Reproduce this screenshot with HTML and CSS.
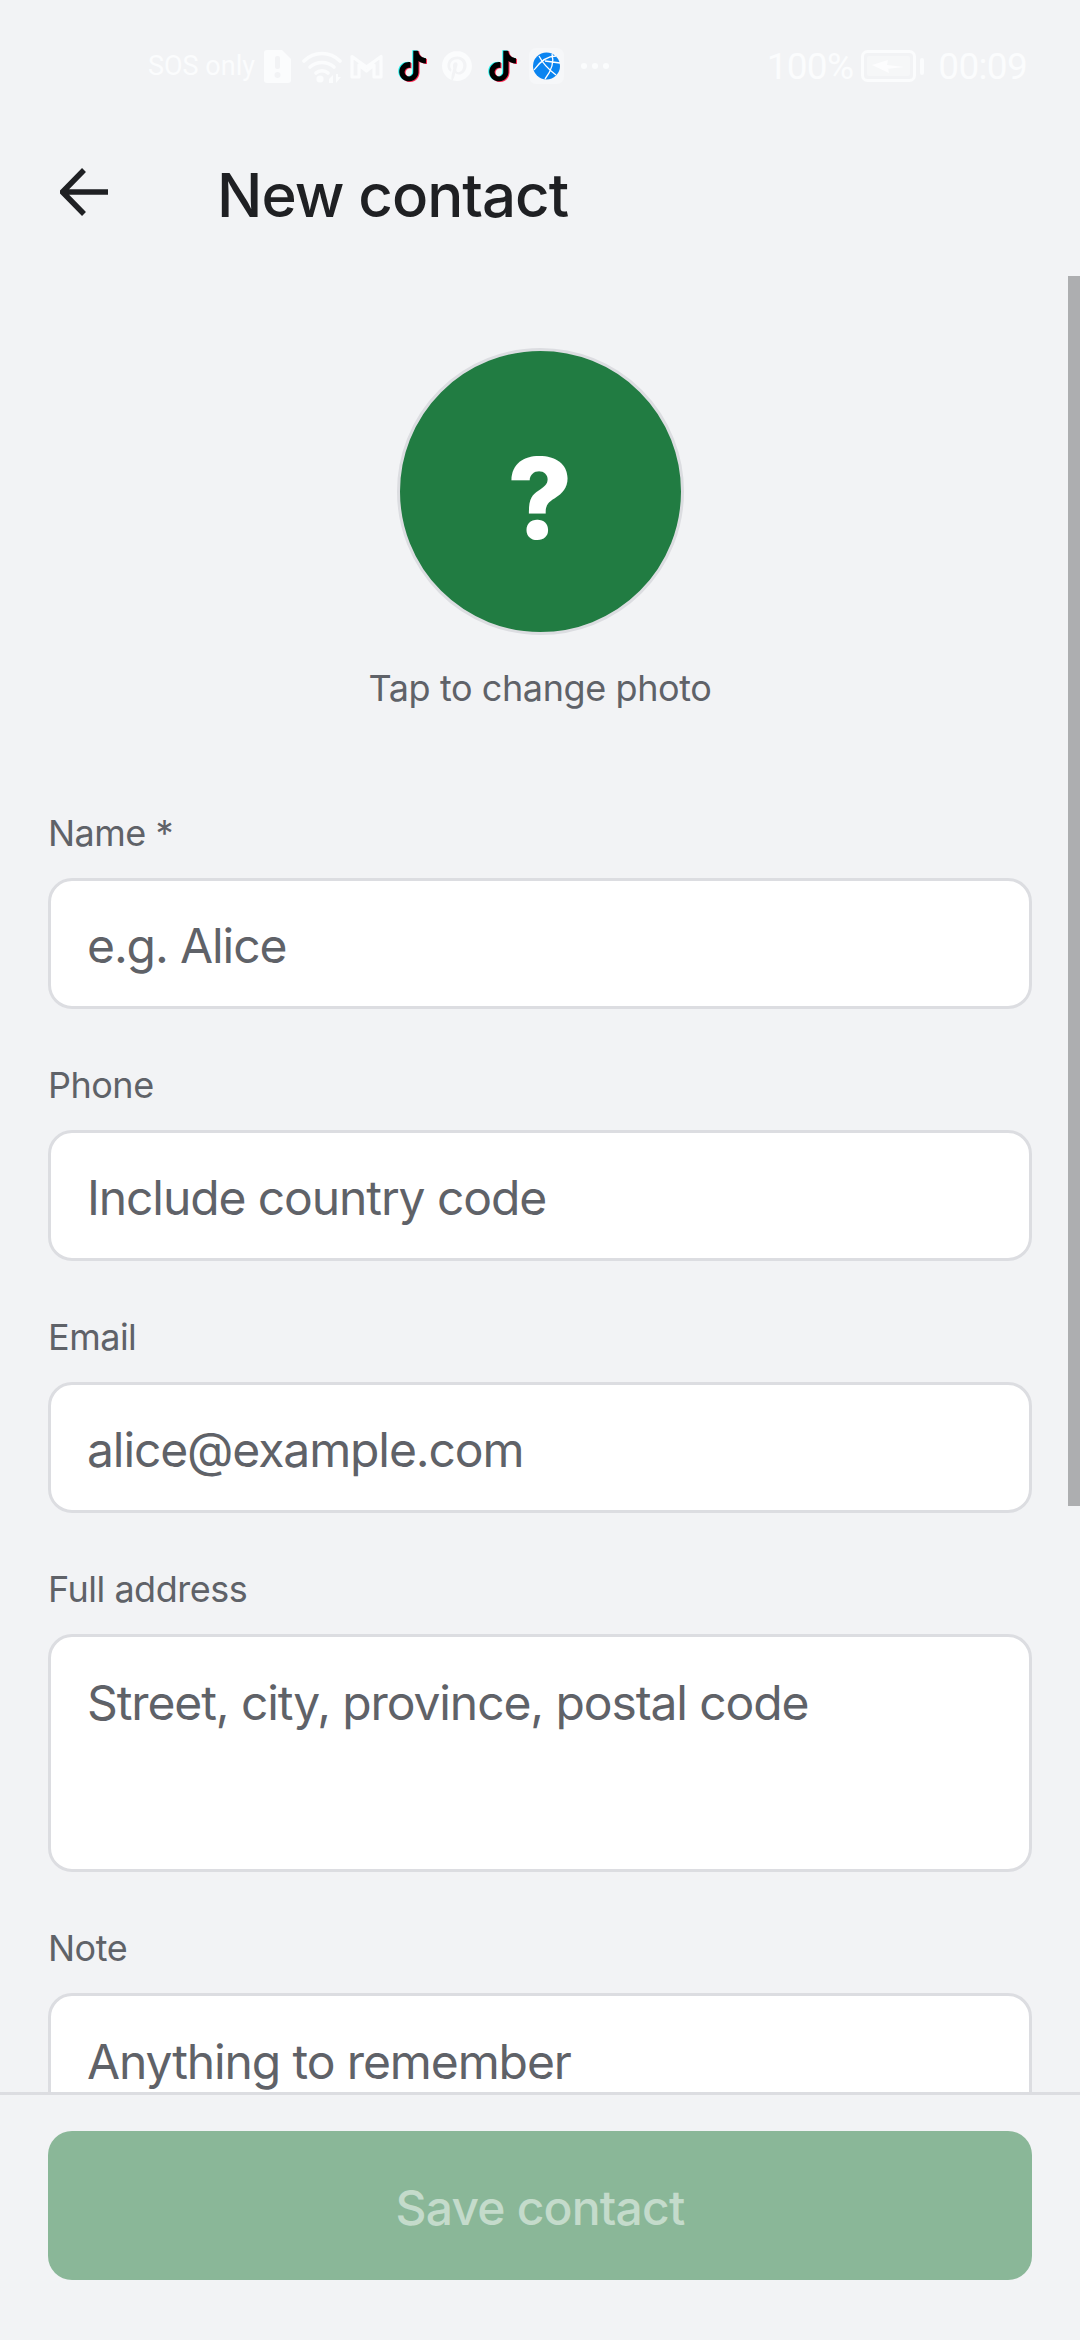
FILE: index.html
```html
<!DOCTYPE html>
<html lang="en">
<head>
<meta charset="utf-8">
<title>New contact</title>
<link rel="stylesheet" href="styles.css">
</head>
<body>
<div class="screen">
  <svg width="0" height="0" class="defs">
    <defs>
      <path id="tt" d="M12.525.02c1.31-.02 2.61-.01 3.91-.02.08 1.53.63 3.09 1.75 4.17 1.12 1.11 2.7 1.62 4.24 1.79v4.03c-1.44-.05-2.89-.35-4.2-.97-.57-.26-1.1-.59-1.62-.93-.01 2.92.01 5.84-.02 8.75-.08 1.4-.54 2.79-1.35 3.94-1.31 1.92-3.58 3.17-5.91 3.21-1.43.08-2.86-.31-4.08-1.03-2.02-1.19-3.44-3.37-3.65-5.71-.02-.5-.03-1-.01-1.49.18-1.9 1.12-3.72 2.58-4.96 1.66-1.44 3.98-2.13 6.15-1.72.02 1.48-.04 2.96-.04 4.44-.99-.32-2.15-.23-3.02.37-.63.41-1.11 1.04-1.36 1.75-.21.51-.15 1.07-.14 1.61.24 1.64 1.82 3.02 3.5 2.87 1.12-.01 2.19-.66 2.77-1.61.19-.33.4-.67.41-1.06.1-1.79.06-3.57.07-5.36.01-4.03-.01-8.05.02-12.07z"/>
    </defs>
  </svg>
  <header class="status">
    <div class="status-left">
      <span class="sos">SOS only</span>
      <svg class="i-sim" viewBox="0 0 27 33"><path d="M3 0h15l9 9v21a3 3 0 0 1-3 3H3a3 3 0 0 1-3-3V3a3 3 0 0 1 3-3z" fill="#fbfcfd"/><rect x="11" y="6" width="5" height="13" rx="2" fill="#f2f3f5"/><circle cx="13.5" cy="25" r="3" fill="#f2f3f5"/></svg>
      <svg class="i-wifi" viewBox="0 0 40 33"><g fill="none" stroke="#fbfcfd" stroke-linecap="round" stroke-width="3.6"><path d="M2 11C12 1 28 1 38 11"/><path d="M8 17c7-6 17-6 24 0"/><path d="M14 23c3-3 9-3 12 0"/></g><circle cx="18" cy="29" r="3.6" fill="#fbfcfd"/><path d="M27 33v-4l4-4v8zM34 24v9l5-6h-3v-3z" fill="#fbfcfd"/></svg>
      <svg class="i-m" viewBox="0 0 33 26"><path d="M2 24V3.500L16.500 14 31 3.500V24h-7V12l-7.500 6L9 12v12z" fill="none" stroke="#fbfcfd" stroke-width="3.200" stroke-linejoin="round"/></svg>
      <svg class="i-tt" viewBox="-1 -1 25 26"><use href="#tt" x="-.8" y="-.3" fill="#25f4ee"/><use href="#tt" x=".8" y=".5" fill="#fe2c55"/><use href="#tt" fill="#000"/></svg>
      <svg class="i-pin" viewBox="0 0 24 24"><path fill="#fbfcfd" d="M12.017 0C5.396 0 .029 5.367.029 11.987c0 5.079 3.158 9.417 7.618 11.162-.105-.949-.199-2.403.041-3.439.219-.937 1.406-5.957 1.406-5.957s-.359-.72-.359-1.781c0-1.663.967-2.911 2.168-2.911 1.024 0 1.518.769 1.518 1.688 0 1.029-.653 2.567-.992 3.992-.285 1.193.6 2.165 1.775 2.165 2.128 0 3.768-2.245 3.768-5.487 0-2.861-2.063-4.869-5.008-4.869-3.41 0-5.409 2.562-5.409 5.199 0 1.033.394 2.143.889 2.741.099.12.112.225.085.345-.09.375-.293 1.199-.334 1.363-.053.225-.172.271-.401.165-1.495-.69-2.433-2.878-2.433-4.646 0-3.776 2.748-7.252 7.92-7.252 4.158 0 7.392 2.967 7.392 6.923 0 4.135-2.607 7.462-6.233 7.462-1.214 0-2.354-.629-2.758-1.379l-.749 2.848c-.269 1.045-1.004 2.352-1.498 3.146 1.123.345 2.306.535 3.55.535 6.607 0 11.985-5.365 11.985-11.987C23.97 5.39 18.592.026 11.985.026L12.017 0z"/></svg>
      <svg class="i-tt i-tt2" viewBox="-1 -1 25 26"><use href="#tt" x="-.8" y="-.3" fill="#25f4ee"/><use href="#tt" x=".8" y=".5" fill="#fe2c55"/><use href="#tt" fill="#000"/></svg>
      <svg class="i-globe" viewBox="0 0 35 36"><rect width="35" height="36" rx="7" fill="#f6f7f9"/><circle cx="17.500" cy="18" r="13.500" fill="#0a84f0"/><path d="M5 22C12 12 20 8 27 8M10 8c3 6 9 13 17 19M23 6c2 7 0 16-7 25M16 13l15 2" fill="none" stroke="#fff" stroke-width="1.300"/></svg>
      <span class="dots"><i></i><i></i><i></i></span>
    </div>
    <div class="status-right">
      <span class="pct">100%</span>
      <svg class="i-batt" viewBox="0 0 63 32"><rect x="1.500" y="1.500" width="52" height="29" rx="5" fill="none" stroke="#fbfcfd" stroke-width="3"/><rect x="6" y="6" width="43" height="20" rx="2" fill="#f6f7f8"/><path d="M11 15l16-5-1 5 17 2-18 2 2-1 1 5z" fill="#fdfdfe"/><rect x="59" y="8" width="4" height="17" rx="2" fill="#fbfcfd"/></svg>
      <span class="time">00:09</span>
    </div>
  </header>

  <div class="appbar">
    <svg class="back" viewBox="0 0 48 48"><path d="M24 2L2.500 24 24 46M3 24h45" fill="none" stroke="#1f2023" stroke-width="5.500"/></svg>
    <h1 class="title">New contact</h1>
  </div>

  <main class="scroll">
    <section class="photo">
      <div class="avatar"><span class="mark">?</span></div>
      <p class="hint">Tap to change photo</p>
    </section>
    <div class="field">
      <div class="label">Name *</div>
      <div class="input"><span class="ph">e.g. Alice</span></div>
    </div>
    <div class="field">
      <div class="label">Phone</div>
      <div class="input"><span class="ph">Include country code</span></div>
    </div>
    <div class="field">
      <div class="label">Email</div>
      <div class="input"><span class="ph">alice@example.com</span></div>
    </div>
    <div class="field">
      <div class="label">Full address</div>
      <div class="input area"><span>Street, city, province, postal code</span></div>
    </div>
    <div class="field">
      <div class="label">Note</div>
      <div class="input area"><span>Anything to remember</span></div>
    </div>
    <div class="scrollbar"></div>
  </main>

  <footer class="bottom">
    <div class="save">Save contact</div>
  </footer>
</div>
</body>
</html>
```

FILE: styles.css
```css
* { box-sizing: border-box; }
html, body { margin: 0; padding: 0; }
body { background: #f2f3f5; font-family: "Inter", "Noto Sans", sans-serif; }
.defs { position: absolute; }
.screen { width: 1080px; height: 2340px; display: flex; flex-direction: column; background: #f2f3f5; overflow: hidden; }

.status { height: 108px; padding: 48px 53px 0 148px; display: flex; justify-content: space-between; align-items: flex-start; color: #fbfcfd; font-family: "Roboto", sans-serif; }
.status-left, .status-right { display: flex; align-items: center; height: 36px; }
.sos { font-size: 27px; width: 116px; white-space: nowrap; }
.status svg { flex: none; display: block; }
.i-sim { width: 27px; height: 33px; margin-right: 11px; }
.i-wifi { width: 40px; height: 33px; margin-right: 8px; }
.i-m { width: 33px; height: 26px; margin-right: 13px; }
.i-tt { width: 32px; height: 36px; margin-right: 14px; }
.i-pin { width: 30px; height: 30px; margin-right: 14px; }
.i-tt2 { margin-right: 11px; }
.i-globe { width: 35px; height: 36px; margin-right: 17px; }
.dots { display: flex; gap: 5px; }
.dots i { width: 6px; height: 6px; border-radius: 50%; background: #fbfcfd; }
.pct, .time { font-size: 37px; font-weight: 400; white-space: nowrap; letter-spacing: -.7px; }
.pct { margin-right: 8px; }
.i-batt { width: 63px; height: 32px; margin-right: 14px; }

.appbar { height: 168px; display: flex; align-items: center; padding-left: 60px; }
.back { width: 48px; height: 48px; margin-right: 109px; }
.title { margin: 6px 0 0; font-size: 60px; font-weight: 500; color: #1f2023; line-height: 72px; letter-spacing: -1px; }

.scroll { position: relative; flex: 1; min-height: 0; overflow: hidden; padding: 72px 48px 0; }
.scrollbar { position: absolute; top: 0; right: 0; width: 12px; height: 1230px; background: #adaeb0; }
.photo { display: flex; flex-direction: column; align-items: center; }
.avatar { width: 287px; height: 287px; border-radius: 50%; border: 3px solid #dcdde1; background: #217c42; display: flex; align-items: center; justify-content: center; }
.mark { font-size: 113px; font-weight: 800; color: #fff; line-height: 1; margin-top: 13px; }
.hint { margin: 28px 0 0; font-size: 36px; line-height: 50px; color: #5f6268; letter-spacing: -.4px; }

.photo + .field { margin-top: 93px; }
.field + .field { margin-top: 50px; }
.label { font-size: 36px; line-height: 50px; color: #5f6268; margin-bottom: 22px; padding-top: 2px; height: 50px; letter-spacing: -.5px; }
.input { height: 131px; padding: 4px 36px 0; display: flex; align-items: center; background: #fff; border: 3px solid #dcdde1; border-radius: 24px; font-size: 48px; color: #5f6268; letter-spacing: -1.1px; }
.field + .field { margin-top: 49px; }
.area { height: 238px; align-items: flex-start; padding-top: 36px; line-height: 60px; }

.bottom { height: 248px; flex: none; border-top: 3px solid #dcdde1; padding: 36px 48px 0; background: #f2f3f5; }
.save { height: 149px; display: flex; align-items: center; justify-content: center; background: #8ab798; border-radius: 24px; color: #c4dbcb; font-size: 48px; font-weight: 500; letter-spacing: -.8px; padding-top: 3px; }
```
